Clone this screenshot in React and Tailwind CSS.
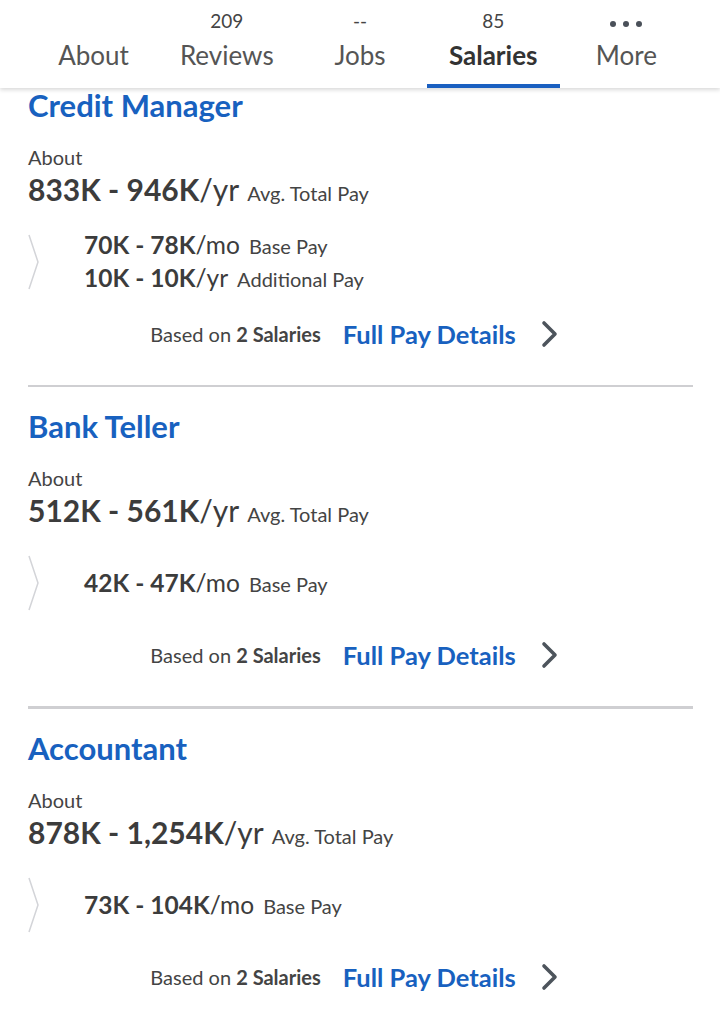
const TABS = [
  { count: '', label: 'About' },
  { count: '209', label: 'Reviews' },
  { count: '--', label: 'Jobs' },
  { count: '85', label: 'Salaries', active: true },
  { count: 'dots', label: 'More' },
]

const JOBS = [
  {
    title: 'Credit Manager',
    total: ['833K - 946K', '/yr'],
    rows: [
      { range: '70K - 78K', unit: '/mo', label: 'Base Pay' },
      { range: '10K - 10K', unit: '/yr', label: 'Additional Pay' },
    ],
  },
  {
    title: 'Bank Teller',
    total: ['512K - 561K', '/yr'],
    rows: [{ range: '42K - 47K', unit: '/mo', label: 'Base Pay' }],
  },
  {
    title: 'Accountant',
    total: ['878K - 1,254K', '/yr'],
    rows: [{ range: '73K - 104K', unit: '/mo', label: 'Base Pay' }],
  },
]

function Header() {
  return (
    <div className="relative z-10 h-[88px] bg-white shadow-[0_2px_4px_rgba(0,0,0,0.15)]">
      <div className="grid h-full grid-cols-5 px-[27px]">
        {TABS.map((t) => (
          <div key={t.label} className="relative flex flex-col items-center">
            <div className="mt-[9px] flex h-[24px] items-center text-[19px] leading-[24px] text-[#444]">
              {t.count === 'dots' ? (
                <span className="flex gap-[7px] pt-[5px]">
                  <span className="h-[6px] w-[6px] rounded-full bg-[#4a5059]" />
                  <span className="h-[6px] w-[6px] rounded-full bg-[#4a5059]" />
                  <span className="h-[6px] w-[6px] rounded-full bg-[#4a5059]" />
                </span>
              ) : (
                t.count
              )}
            </div>
            <div className={`mt-[5px] text-[26px] leading-[34px] ${t.active ? 'font-bold text-[#333]' : 'text-[#555]'}`}>
              {t.label}
            </div>
            {t.active && <div className="absolute bottom-0 left-0 right-0 h-[4px] bg-[#1a5fc0]" />}
          </div>
        ))}
      </div>
    </div>
  )
}

function Chevron({ className }) {
  return (
    <svg viewBox="0 0 12 56" className={className} fill="none">
      <path d="M1 1 L10 28 L1 55" stroke="#d3d4d8" strokeWidth="1.5" />
    </svg>
  )
}

function JobCard({ job, last, thick }) {
  return (
    <div>
      <h2 className="text-[31px] font-bold leading-[34px] text-[#1861bf]">{job.title}</h2>
      <div className="mt-[23px] text-[20px] leading-[24px] text-[#444]">About</div>
      <div className="mt-[3px] flex items-baseline leading-[34px] text-[#3c3c3c]">
        <span className="text-[30px] font-bold">{job.total[0]}</span>
        <span className="text-[30px]">{job.total[1]}</span>
        <span className="ml-[8px] text-[20px] text-[#444]">Avg. Total Pay</span>
      </div>
      {/* rows may be taller than the bracket; it stays 56px */}
      <div className="mt-[24px] flex h-[56px] items-center">
        <Chevron className="h-[56px] w-[12px] shrink-0" />
        <div className="ml-[44px] flex flex-col">
          {job.rows.map((r) => (
            <div key={r.label} className="flex items-baseline leading-[32px] text-[#3c3c3c]">
              <span className="text-[24.5px] font-bold">{r.range}</span>
              <span className="text-[24.5px]">{r.unit}</span>
              <span className="ml-[9px] text-[20px] text-[#444]">{r.label}</span>
            </div>
          ))}
        </div>
      </div>
      <div className="mt-[29px] flex items-center justify-center pr-[13px] leading-[30px]">
        <span className="text-[20px] text-[#444]">
          Based on <span className="font-bold">2 Salaries</span>
        </span>
        <span className="ml-[22px] text-[25.5px] font-bold text-[#1861bf]">Full Pay Details</span>
        <svg viewBox="0 0 18 28" className="ml-[24px] h-[28px] w-[18px]" fill="none">
          <path d="M4 3 L15 14 L4 25" stroke="#4d545c" strokeWidth="3.6" strokeLinecap="round" strokeLinejoin="round" />
        </svg>
      </div>
      {!last && <div className={`mt-[36px] mb-[22px] bg-[#cfcfd2] ${thick ? 'h-[3px]' : 'h-[2px]'}`} />}
    </div>
  )
}

export default function App() {
  return (
    <div className="min-h-[1024px] bg-white font-['Lato',sans-serif]">
      <Header />
      <div className="pl-[28px] pr-[27px]">
        {JOBS.map((job, i) => (
          <JobCard key={job.title} job={job} last={i === JOBS.length - 1} thick={i === 1} />
        ))}
      </div>
    </div>
  )
}
